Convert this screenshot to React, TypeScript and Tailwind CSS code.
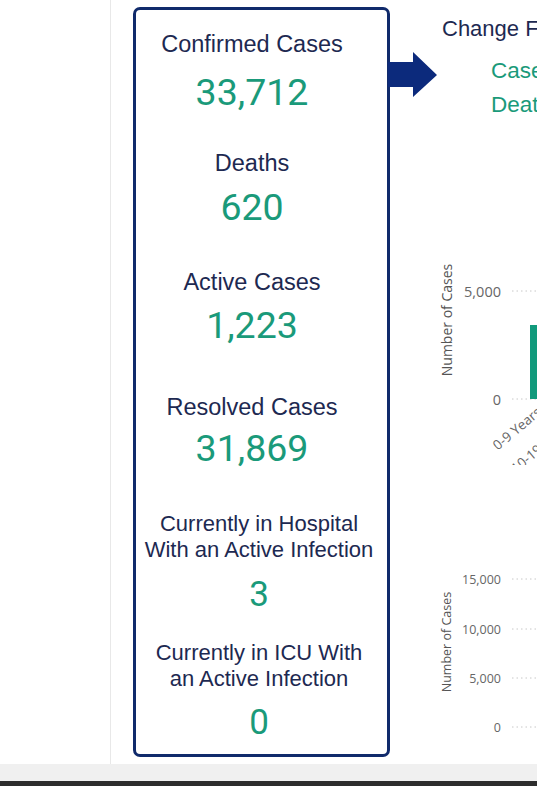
import React from "react";

const labelBig = "text-[23.5px] leading-[26px] text-[#1d2951] text-center whitespace-nowrap";
const label = "text-[22px] leading-[26px] text-[#1d2951] text-center whitespace-nowrap";
const num = "text-[37.5px] leading-[44px] text-[#1a9a7a] text-center whitespace-nowrap";
const arial = { fontFamily: '"Liberation Sans", Arial, sans-serif' };
const roboto = { fontFamily: 'Roboto, "Liberation Sans", sans-serif' };

function Chart1() {
  return (
    <svg width="100" height="215" className="block" style={{ fontFamily: '"Open Sans", "DejaVu Sans", sans-serif' }}>
      <text x="9" y="70" transform="rotate(-90 9 70)" textAnchor="middle" dominantBaseline="central" fontSize="14" fill="#555">Number of Cases</text>
      <text x="64" y="41" textAnchor="end" dominantBaseline="central" fontSize="14.5" fill="#666">5,000</text>
      <text x="64" y="149" textAnchor="end" dominantBaseline="central" fontSize="14.5" fill="#666">0</text>
      <line x1="75" y1="41" x2="100" y2="41" stroke="#c8c8c8" strokeDasharray="1.5 3" />
      <line x1="75" y1="149" x2="100" y2="149" stroke="#c8c8c8" strokeDasharray="1.5 3" />
      <rect x="93" y="75" width="20" height="74" fill="#119a7c" />
      <text x="98" y="155" transform="rotate(-40 98 155)" textAnchor="end" dominantBaseline="hanging" fontSize="13.5" fill="#666">0-9 Years</text>
      <text x="128" y="168" transform="rotate(-40 128 168)" textAnchor="end" dominantBaseline="hanging" fontSize="13.5" fill="#666">10-19 Years</text>
    </svg>
  );
}

function Chart2() {
  const rows: [string, number][] = [["15,000", 19], ["10,000", 69], ["5,000", 118], ["0", 167]];
  return (
    <svg width="100" height="190" className="block" style={{ fontFamily: '"Open Sans", "DejaVu Sans", sans-serif' }}>
      <text x="9" y="82" transform="rotate(-90 9 82)" textAnchor="middle" dominantBaseline="central" fontSize="12.5" fill="#555">Number of Cases</text>
      {rows.map(([t, y]) => (
        <g key={t}>
          <text x="64" y={y} textAnchor="end" dominantBaseline="central" fontSize="12.5" fill="#666">{t}</text>
          <line x1="75" y1={y} x2="100" y2={y} stroke="#c8c8c8" strokeDasharray="1.5 3" />
        </g>
      ))}
    </svg>
  );
}

export default function App() {
  return (
    <div className="w-[537px] h-[786px] overflow-hidden flex flex-col bg-white">
      <div className="h-[764px] flex flex-row">
        <div className="w-[111px] shrink-0 border-r border-[#e8e8e8]" />
        <div className="ml-[22px] mt-[7px] w-[257px] h-[750px] shrink-0 border-[3px] border-[#102a6b] rounded-[7px] flex flex-col" style={arial}>
          <div className="pr-[19px] flex flex-col">
            <div className={labelBig + " mt-[21px]"}>Confirmed Cases</div>
            <div className={num + " mt-[13px]"} style={roboto}>33,712</div>
            <div className={labelBig + " mt-[36px]"}>Deaths</div>
            <div className={num + " mt-[9px]"} style={roboto}>620</div>
            <div className={labelBig + " mt-[40px]"}>Active Cases</div>
            <div className={num + " mt-[8px]"} style={roboto}>1,223</div>
            <div className={labelBig + " mt-[47px]"}>Resolved Cases</div>
            <div className={num + " mt-[6px]"} style={roboto}>31,869</div>
          </div>
          <div className="pr-[5px] flex flex-col">
            <div className={label + " mt-[41px]"}>Currently in Hospital<br />With an Active Infection</div>
            <div className="text-[35px] leading-[42px] text-[#1a9a7a] text-center mt-[11px]" style={roboto}>3</div>
            <div className={label + " mt-[24px]"}>Currently in ICU With<br />an Active Infection</div>
            <div className="text-[35px] leading-[42px] text-[#1a9a7a] text-center mt-[10px]" style={roboto}>0</div>
          </div>
        </div>
        <svg width="49" height="45" className="shrink-0 -ml-[2px] mt-[52px] block">
          <path d="M0 10 H25 V0 L49 23 L25 45 V35 H0 Z" fill="#0c2a7c" />
        </svg>
        <div className="flex-1 min-w-0 overflow-hidden flex flex-col" style={arial}>
          <div className="ml-[5px] mt-[17px] text-[22px] leading-[24px] text-[#1d2951] whitespace-nowrap">Change From Yesterday</div>
          <div className="ml-[54px] mt-[13px] text-[22.5px] leading-[34px] text-[#1a9a7a] whitespace-nowrap">
            <div>Cases +12</div>
            <div>Deaths +0</div>
          </div>
          <div className="mt-[128px]"><Chart1 /></div>
          <div className="mt-[95px]"><Chart2 /></div>
        </div>
      </div>
      <div className="h-[17px] bg-[#f0f0f0]" />
      <div className="flex-1 bg-[#2d2d2d]" />
    </div>
  );
}
